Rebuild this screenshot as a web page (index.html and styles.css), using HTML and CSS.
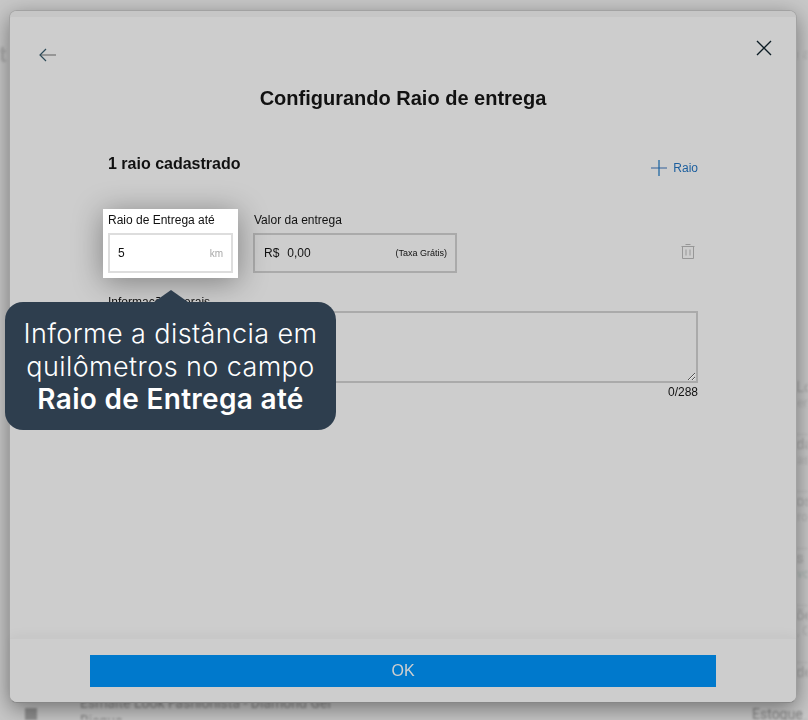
FILE: index.html
```html
<!DOCTYPE html>
<html lang="pt-BR">
<head>
<meta charset="utf-8">
<title>Configurando Raio de entrega</title>
<link rel="stylesheet" href="styles.css">
</head>
<body>
<div class="backdrop">
  <div class="bg-top"><span class="bg-heading">t</span><span class="bg-note">n a</span></div>
  <ul class="bg-list">
    <li><b>Lo</b><small>en</small></li>
    <li><b>da</b><small>ast</small></li>
    <li><b>os</b><small>ro</small></li>
    <li><b>s p</b><small class="green">vo</small></li>
    <li><b>õe</b><small>, C</small></li>
    <li><b>de</b><small></small></li>
  </ul>
  <div class="bg-bottom">
    <span class="bg-thumb"></span>
    <p class="bg-product">Esmalte Look Fashionista - Diamond Gel<br>Bisque</p>
    <span class="bg-stock">Estoque</span>
  </div>
</div>

<div class="modal">
  <div class="modal-strip"></div>
  <header class="modal-head">
    <button class="icon-btn" type="button" aria-label="Voltar">
      <svg width="18" height="14" viewBox="0 0 18 14"><path class="arrow-stem" d="M1 7H17"/><path class="arrow-head" d="M7 1L1 7L7 13"/></svg>
    </button>
    <button class="icon-btn" type="button" aria-label="Fechar">
      <svg width="16" height="16" viewBox="0 0 16 16"><path class="close-x" d="M1 1L15 15M15 1L1 15"/></svg>
    </button>
  </header>
  <h1 class="modal-title">Configurando Raio de entrega</h1>
  <main class="modal-body">
    <div class="summary">
      <h2>1 raio cadastrado</h2>
      <button class="add-btn" type="button">
        <svg width="16" height="16" viewBox="0 0 16 16"><path class="plus-h" d="M0 8H16"/><path class="plus-v" d="M8 0V16"/></svg>
        <span>Raio</span>
      </button>
    </div>
    <div class="fields">
      <div class="field field-highlight">
        <label class="field-label" for="raio">Raio de Entrega até</label>
        <div class="input-box input-light">
          <input id="raio" class="plain-input" type="text" value="5">
          <span class="unit">km</span>
        </div>
      </div>
      <div class="field field-value">
        <label class="field-label">Valor da entrega</label>
        <div class="input-box input-value">
          <span class="currency">R$</span>
          <span class="amount">0,00</span>
          <span class="free">(Taxa Grátis)</span>
        </div>
      </div>
      <button class="trash-btn" type="button" aria-label="Excluir">
        <svg width="14" height="15" viewBox="0 0 14 15"><path class="trash" d="M4.5 .5H9.5M.5 2.5H13.5M1.5 2.5V14.5H12.5V2.5M5 5.5V11.5M9 5.5V11.5"/></svg>
      </button>
    </div>
    <div class="info">
      <label class="field-label" for="info">Informações gerais</label>
      <textarea id="info" class="info-text"></textarea>
      <div class="counter">0/288</div>
    </div>
  </main>
  <footer class="modal-foot">
    <button class="ok-btn" type="button">OK</button>
  </footer>

  <div class="tooltip">
    <span class="tooltip-arrow"></span>
    Informe a distância em quilômetros no campo <strong>Raio de Entrega até</strong>
  </div>
</div>
</body>
</html>
```

FILE: styles.css
```css
* { box-sizing: border-box; }
html, body { margin: 0; height: 720px; overflow: hidden; }
body { background: #c8c8c8; font-family: "Liberation Sans", Arial, sans-serif; color: #111; }

.backdrop {
  height: 720px;
  overflow: hidden;
  display: flex;
  flex-direction: column;
  font-family: Roboto, sans-serif;
  color: #a8a8a8;
  filter: blur(.8px);
}
.bg-top { display: flex; justify-content: space-between; align-items: center; height: 28px; margin-top: 40px; }
.bg-heading { font-size: 22px; font-weight: 700; margin-left: -1px; color: #adadad; }
.bg-note { font-size: 14px; color: #b4b4b4; margin-right: -2px; }
.bg-list { list-style: none; margin: 310px 0 0 780px; padding: 0; width: 60px; }
.bg-list li { height: 57px; padding: 0 0 0 17px; border-bottom: 1px solid #b8b8b8; display: flex; flex-direction: column; white-space: nowrap; }
.bg-list b { font-weight: 400; font-size: 15px; line-height: 18px; margin-left: -1px; color: #a4a4a4; }
.bg-list small { font-size: 12px; line-height: 14px; color: #b0b0b0; }
.bg-list small.green { color: #a6b2ae; }
.bg-bottom { position: fixed; left: 0; right: 0; top: 696px; height: 24px; }
.bg-thumb { position: absolute; left: 25px; top: 12px; width: 12px; height: 12px; background: #909090; }
.bg-product { position: absolute; left: 80px; top: -2px; margin: 0; font-size: 14px; line-height: 18px; color: #858585; white-space: nowrap; }
.bg-stock { position: absolute; left: 752px; top: 10px; font-size: 14px; color: #858585; }

.modal {
  position: fixed;
  left: 9px;
  top: 10px;
  width: 788px;
  height: 693px;
  display: flex;
  flex-direction: column;
  background: #cdcdcd;
  border: 1px solid #a2a2a2;
  border-bottom-color: #8a8a8a;
  border-radius: 8px;
  box-shadow: 0 6px 22px rgba(0, 0, 0, .42);
}
.modal-strip { height: 6px; flex: none; background: #c6c6c6; border-radius: 7px 7px 0 0; }
.modal-head { display: flex; justify-content: space-between; align-items: flex-start; height: 66px; padding: 23px 24px 0 29px; flex: none; }
.icon-btn { background: none; border: 0; padding: 0; display: flex; }
.icon-btn:first-child { margin-top: 8px; }
.arrow-stem { stroke: #7e7e7e; stroke-width: 1.4; fill: none; }
.arrow-head { stroke: #2c4a58; stroke-width: 1.2; fill: none; }
.close-x { stroke: #0c1c24; stroke-width: 1.4; fill: none; }

.modal-title { margin: 0; text-align: center; font-size: 20px; line-height: 24px; font-weight: 700; color: #111; flex: none; padding-top: 3px; height: 32px; }

.modal-body { flex: 1; min-height: 0; padding: 0 98px; }
.summary { display: flex; justify-content: space-between; height: 94px; padding-top: 39px; }
.summary h2 { margin: 0; font-size: 16px; line-height: 20px; font-weight: 700; color: #111; }
.add-btn { display: flex; align-items: center; gap: 6px; height: 16px; margin-top: 6px; padding: 0; border: 0; background: none; font: 12px "Liberation Sans", Arial, sans-serif; color: #1b5e9e; }
.plus-h { stroke: #5d7fa8; stroke-width: 1.4; fill: none; }
.plus-v { stroke: #14619f; stroke-width: 1.2; fill: none; }

.fields { display: flex; align-items: flex-start; height: 86px; position: relative; }
.field-label { display: block; font-size: 12px; line-height: 14px; color: #111; }
.field-highlight { width: 135px; height: 69px; margin-left: -5px; padding: 4px 5px 5px; background: #fff; box-shadow: 0 4px 30px rgba(0, 0, 0, .38); position: relative; }
.field-highlight .field-label { margin-bottom: 6px; }
.field-value { width: 204px; margin-left: 15px; padding-top: 4px; }
.field-value .field-label { margin: 0 0 6px 1px; }
.input-box { height: 40px; display: flex; align-items: center; }
.input-light { border: 2px solid #ddd; padding: 0 8px 0 8px; }
.plain-input { width: 60px; flex: 1; min-width: 0; border: 0; outline: 0; background: none; padding: 0; font: 12px "Liberation Sans", Arial, sans-serif; color: #111; }
.unit { font-size: 10px; color: #a9a9a9; }
.input-value { border: 2px solid #aaa; padding: 0 8px 0 9px; font-size: 12px; color: #111; }
.amount { margin-left: 8px; }
.free { margin-left: auto; font-size: 9px; }
.trash-btn { margin-left: auto; margin-top: 35px; margin-right: 3px; padding: 0; border: 0; background: none; display: flex; }
.trash { stroke: #979797; stroke-width: 1; fill: none; }

.info { margin-top: 0; }
.info .field-label { height: 16px; }
.info-text { display: block; width: 590px; height: 72px; border: 2px solid #aaa; border-radius: 0; background: none; outline: 0; padding: 4px; margin: 0; }
.counter { text-align: right; font-size: 12px; line-height: 16px; color: #111; margin-top: 1px; }

.modal-foot {
  flex: none;
  height: 64px;
  padding: 16px 80px;
  background: #cdcdcd;
  border-radius: 0 0 7px 7px;
  box-shadow: 0 -1px 14px rgba(0, 0, 0, .05);
  border-top: 1px solid #c8c8c8;
}
.ok-btn { display: block; width: 626px; height: 32px; margin: 0; border: 0; padding: 0; background: #0079cc; color: #cfcfcf; font: 16px "Liberation Sans", Arial, sans-serif; }

.tooltip {
  position: absolute;
  left: -5px;
  top: 291px;
  width: 331px;
  height: 128px;
  padding: 16px 8px 0;
  background: #2e3e4e;
  border-radius: 18px;
  color: #fff;
  font: 300 27px/32.5px Inter, sans-serif;
  letter-spacing: .4px;
  text-align: center;
  z-index: 2;
}
.tooltip strong { font-weight: 600; font-size: 28px; letter-spacing: .3px; }
.tooltip-arrow {
  position: absolute;
  left: 149px;
  top: -12px;
  border-left: 17px solid transparent;
  border-right: 17px solid transparent;
  border-bottom: 12px solid #2e3e4e;
}
```
